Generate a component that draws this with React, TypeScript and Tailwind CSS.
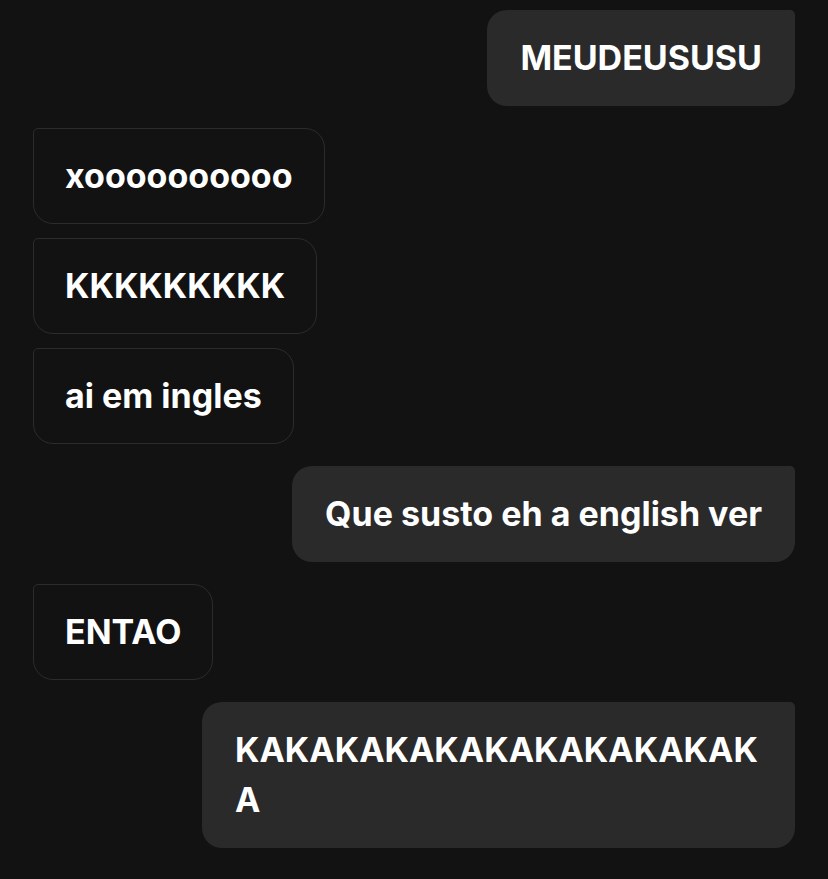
import React from "react";

type Message = {
  id: number;
  text: string;
  mine: boolean;
};

const messages: Message[] = [
  { id: 1, text: "MEUDEUSUSU", mine: true },
  { id: 2, text: "xoooooooooo", mine: false },
  { id: 3, text: "KKKKKKKKK", mine: false },
  { id: 4, text: "ai em ingles", mine: false },
  { id: 5, text: "Que susto eh a english ver", mine: true },
  { id: 6, text: "ENTAO", mine: false },
  { id: 7, text: "KAKAKAKAKAKAKAKAKAKAKA", mine: true },
];

function Bubble({ msg }: { msg: Message }) {
  if (msg.mine) {
    return (
      <div className="flex justify-end">
        <div className="max-w-[593px] break-all rounded-[20px] rounded-tr-[5px] bg-[#2a2a2a] px-[33px] py-[23px] text-white">
          {msg.text}
        </div>
      </div>
    );
  }
  return (
    <div className="flex justify-start">
      <div className="max-w-[593px] break-all rounded-[20px] rounded-tl-[5px] border border-[#2c2c2c] px-[31px] py-[22px] text-white">
        {msg.text}
      </div>
    </div>
  );
}

export default function App() {
  return (
    <div
      className="min-h-[879px] w-full bg-[#121212] px-[33px] pt-[10px] text-[34px] leading-[50px] font-bold"
      style={{ fontFamily: "Inter, 'Liberation Sans', sans-serif" }}
    >
      <div className="flex flex-col">
        {messages.map((msg, i) => {
          const prev = messages[i - 1];
          const gap = !prev ? "" : prev.mine === msg.mine ? "mt-[14px]" : "mt-[22px]";
          return (
            <div key={msg.id} className={gap}>
              <Bubble msg={msg} />
            </div>
          );
        })}
      </div>
    </div>
  );
}
